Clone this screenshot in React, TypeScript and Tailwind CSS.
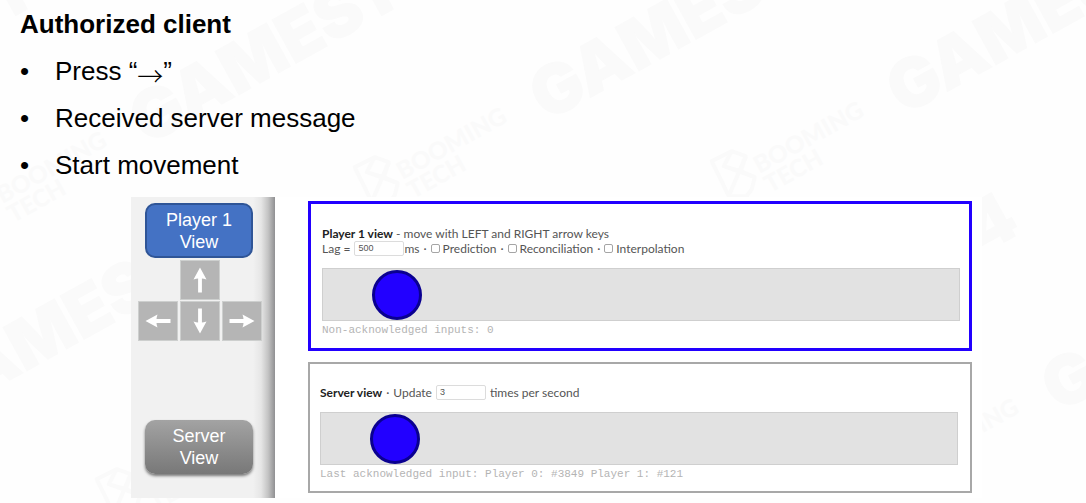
import type { ReactNode } from "react";

const marks = [
  { x: -208, y: 111, tech: false },
  { x: 158, y: 111, tech: true },
  { x: 558, y: 87, tech: true },
  { x: 915, y: 81, tech: true },
  { x: -54, y: 387, tech: false },
  { x: 300, y: 399, tech: true },
  { x: 700, y: 382, tech: false },
  { x: 1070, y: 378, tech: true },
];

function Watermark() {
  return (
    <svg
      aria-hidden="true"
      className="pointer-events-none absolute inset-0 h-full w-full select-none"
      fill="#fafafa"
    >
      {marks.map((m) => (
        <g key={`${m.x},${m.y}`} transform={`translate(${m.x} ${m.y}) rotate(-29)`}>
          <text
            x="-27"
            y="25"
            fontFamily="Inter, sans-serif"
            fontWeight="900"
            fontSize="68"
            stroke="#fafafa"
            strokeWidth="1"
          >
            GAMES104
          </text>
          {m.tech && (
            <>
              <g fontFamily="Lato, sans-serif" fontWeight="900" fontSize="24">
                <text x="-181" y="6">BOOMING</text>
                <text x="-181" y="28">TECH</text>
              </g>
              <g
                transform="translate(-204 -10) rotate(29)"
                fill="none"
                stroke="#fafafa"
                strokeWidth="4"
                strokeLinejoin="round"
              >
                <path d="M-20 -10 L0 -20 L14 -15 L9 0 L23 6 L20 18 L15 25 L-3 25 Z" />
                <path d="M0 -20 L-8 -5 L9 0 M14 -15 L-3 25 M-8 -5 L23 6" />
              </g>
            </>
          )}
        </g>
      ))}
    </svg>
  );
}

const rotations = {
  up: "rotate(0 20 20)",
  right: "rotate(90 20 20)",
  down: "rotate(180 20 20)",
  left: "rotate(270 20 20)",
};

function ArrowKey({ dir }: { dir: keyof typeof rotations }) {
  return (
    <button
      type="button"
      aria-label={`Arrow ${dir}`}
      className="block size-10 border border-[#cdcfce] bg-[#b5b5b5]"
    >
      <svg viewBox="1 1 38 38" className="size-full" fill="#fff">
        <path
          transform={rotations[dir]}
          d="M20 7.5 L26.5 19.5 Q23.5 18.5 21.9 18.5 V32.5 H18.1 V18.5 Q16.5 18.5 13.5 19.5 Z"
        />
      </svg>
    </button>
  );
}

function Field({ id, value }: { id: string; value: string }) {
  return (
    <input
      id={id}
      type="text"
      defaultValue={value}
      className="h-[15px] w-[50px] rounded-xs border border-[#dcdcdc] bg-white px-[3px] font-['Liberation_Sans',sans-serif] text-[9px] text-[#555]"
    />
  );
}

function Check({ label }: { label: string }) {
  return (
    <label className="flex items-center gap-[3px]">
      <input
        type="checkbox"
        className="size-[9px] appearance-none rounded-xs border border-[#a5a5a5] bg-white checked:bg-[#2200ff]"
      />
      {label}
    </label>
  );
}

function Track({ children }: { children?: ReactNode }) {
  return (
    <div className="flex h-[53px] items-center border border-[#cfcfcf] bg-[#e2e2e2] pl-[49px]">
      <div className="size-[50px] rounded-full border-3 border-[#0a0090] bg-[#2200ff]" />
      {children}
    </div>
  );
}

export default function App() {
  return (
    <main className="relative overflow-hidden bg-[#fefefe] pb-[5px] font-['Liberation_Sans',Arial,sans-serif] text-black">
      <Watermark />
      <section className="relative pt-px pl-5 text-[26px] leading-[47px]">
        <h1 className="font-bold">Authorized client</h1>
        <ul>
          {[
            <>
              Press “<span className="align-sub font-['Noto_Sans_CJK_SC',sans-serif] leading-none font-light">→</span>”
            </>,
            "Received server message",
            "Start movement",
          ].map((item, i) => (
            <li key={i} className="flex h-[47px]">
              <span className="w-[35px]">•</span>
              <span>{item}</span>
            </li>
          ))}
        </ul>
      </section>

      <section className="relative mt-2 flex pr-[104px] pl-[131px]">
        <aside className="flex w-36 shrink-0 flex-col items-center bg-[linear-gradient(to_right,#f1f1f1_0,#f1f1f1_122px,#e6e6e6_130px,#c4c4c4_137px,#909092_144px)] pt-[6px] pr-2 pb-6 text-center text-[18px] leading-[22px] text-white">
          <button
            type="button"
            className="h-[55px] w-[108px] rounded-[10px] border-2 border-[#2f5597] bg-[#4472c4] px-2"
          >
            Player 1 View
          </button>
          <div className="mt-[2px] grid grid-cols-3 gap-x-[2px] gap-y-px pl-[2px]">
            <div className="col-start-2">
              <ArrowKey dir="up" />
            </div>
            <div className="col-start-1 row-start-2">
              <ArrowKey dir="left" />
            </div>
            <div className="row-start-2">
              <ArrowKey dir="down" />
            </div>
            <div className="row-start-2">
              <ArrowKey dir="right" />
            </div>
          </div>
          <button
            type="button"
            className="mt-auto h-[54px] w-[108px] rounded-[10px] bg-linear-to-b from-[#a3a3a3] to-[#787878] px-4 shadow-[0_2px_3px_rgba(0,0,0,0.5)]"
          >
            Server View
          </button>
        </aside>

        <div className="flex min-w-0 flex-1 flex-col gap-[11px] bg-white pt-1 pr-[10px] pb-[5px] pl-[33px] font-[Lato,'Open_Sans',sans-serif] text-[12px] leading-[15px] text-[#555]">
          <section className="border-3 border-[#2200ff] pt-[22px] pr-[9px] pb-[10px] pl-[11px]">
            <p>
              <strong className="text-[#222]">Player 1 view</strong> - move with LEFT and RIGHT arrow keys
            </p>
            <div className="mb-3 flex items-center gap-1 whitespace-nowrap">
              <label htmlFor="lag">Lag =</label>
              <span className="flex items-center">
                <Field id="lag" value="500" />
                ms
              </span>
              <span>·</span>
              <Check label="Prediction" />
              <span>·</span>
              <Check label="Reconciliation" />
              <span>·</span>
              <Check label="Interpolation" />
            </div>
            <Track />
            <p className="mt-[2px] font-['Liberation_Mono',monospace] text-[11px] text-[#b4b4b4]">
              Non-acknowledged inputs: 0
            </p>
          </section>

          <section className="border-2 border-[#a8a8a8] pt-[21px] pr-3 pb-[9px] pl-[10px]">
            <div className="mb-3 flex items-center gap-1 whitespace-nowrap">
              <strong className="text-[#222]">Server view</strong>
              <span>·</span>
              <label htmlFor="rate">Update</label>
              <Field id="rate" value="3" />
              <span>times per second</span>
            </div>
            <Track />
            <p className="mt-[2px] font-['Liberation_Mono',monospace] text-[11px] text-[#b4b4b4]">
              Last acknowledged input: Player 0: #3849 Player 1: #121
            </p>
          </section>
        </div>
      </section>
    </main>
  );
}
